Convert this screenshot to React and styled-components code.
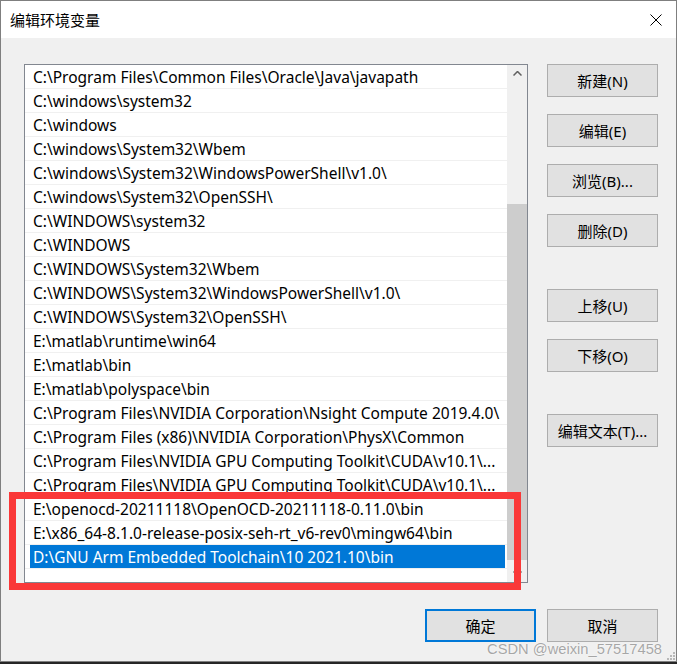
import styled, { createGlobalStyle } from 'styled-components';

const paths = [
  'C:\\Program Files\\Common Files\\Oracle\\Java\\javapath',
  'C:\\windows\\system32',
  'C:\\windows',
  'C:\\windows\\System32\\Wbem',
  'C:\\windows\\System32\\WindowsPowerShell\\v1.0\\',
  'C:\\windows\\System32\\OpenSSH\\',
  'C:\\WINDOWS\\system32',
  'C:\\WINDOWS',
  'C:\\WINDOWS\\System32\\Wbem',
  'C:\\WINDOWS\\System32\\WindowsPowerShell\\v1.0\\',
  'C:\\WINDOWS\\System32\\OpenSSH\\',
  'E:\\matlab\\runtime\\win64',
  'E:\\matlab\\bin',
  'E:\\matlab\\polyspace\\bin',
  'C:\\Program Files\\NVIDIA Corporation\\Nsight Compute 2019.4.0\\',
  'C:\\Program Files (x86)\\NVIDIA Corporation\\PhysX\\Common',
  'C:\\Program Files\\NVIDIA GPU Computing Toolkit\\CUDA\\v10.1\\...',
  'C:\\Program Files\\NVIDIA GPU Computing Toolkit\\CUDA\\v10.1\\...',
  'E:\\openocd-20211118\\OpenOCD-20211118-0.11.0\\bin',
  'E:\\x86_64-8.1.0-release-posix-seh-rt_v6-rev0\\mingw64\\bin',
  'D:\\GNU Arm Embedded Toolchain\\10 2021.10\\bin',
];

const sideButtons = [
  { label: '新建(N)', gap: 0 },
  { label: '编辑(E)', gap: 17 },
  { label: '浏览(B)...', gap: 17 },
  { label: '删除(D)', gap: 17 },
  { label: '上移(U)', gap: 42 },
  { label: '下移(O)', gap: 17 },
  { label: '编辑文本(T)...', gap: 42 },
];

const GlobalStyle = createGlobalStyle`
  html, body {
    margin: 0;
    padding: 0;
    background: #262626;
  }
  body {
    font-family: "Noto Sans", "Noto Sans CJK SC", sans-serif;
  }
`;

const Window = styled.div`
  position: relative;
  box-sizing: border-box;
  width: 677px;
  height: 662px;
  border: 1px solid #7f7f7f;
  background: #f0f0f0;
  display: flex;
  flex-direction: column;
`;

const TitleBar = styled.div`
  height: 37px;
  background: #fff;
  display: flex;
  align-items: center;
  justify-content: space-between;
  padding: 0 14px 0 9px;
`;

const Title = styled.span`
  font-size: 15px;
  color: #000;
`;

const Content = styled.div`
  flex: 1;
  display: flex;
  flex-direction: column;
  padding: 26px 18px 0 23px;
`;

const Main = styled.div`
  display: flex;
  gap: 19px;
`;

const ListBox = styled.div`
  box-sizing: border-box;
  width: 504px;
  height: 519px;
  border: 1px solid #828790;
  background: #fff;
  display: flex;
`;

const List = styled.ul`
  flex: 1;
  margin: 0;
  padding: 0;
  list-style: none;
  overflow: hidden;
`;

const Row = styled.li`
  height: 23px;
  border-bottom: 1px solid #f0f0f0;
  padding: 0 2px 0 5px;
  display: flex;
`;

const Cell = styled.div`
  flex: 1;
  display: flex;
  align-items: center;
  padding-left: 3px;
  font-size: 15.5px;
  white-space: nowrap;
  overflow: hidden;
  color: ${(p) => (p.$selected ? '#fff' : '#000')};
  background: ${(p) => (p.$selected ? '#0078d7' : 'transparent')};
`;

const ScrollBar = styled.div`
  width: 20px;
  background: #f0f0f0;
  display: flex;
  flex-direction: column;
`;

const ArrowBox = styled.div`
  height: 17px;
  display: flex;
  align-items: center;
  justify-content: center;
`;

const Track = styled.div`
  flex: 1;
  padding-top: ${(p) => p.$offset}px;
`;

const Thumb = styled.div`
  height: ${(p) => p.$size}px;
  background: #cdcdcd;
`;

const SideColumn = styled.div`
  display: flex;
  flex-direction: column;
`;

const Button = styled.button`
  box-sizing: border-box;
  width: 111px;
  height: 33px;
  margin-top: ${(p) => p.$gap || 0}px;
  padding: 0;
  background: #e1e1e1;
  border: ${(p) => (p.$default ? '2px solid #0078d7' : '1px solid #adadad')};
  font-family: "Noto Sans", "Noto Sans CJK SC", sans-serif;
  font-size: 15px;
  color: #000;
`;

const Footer = styled.div`
  display: flex;
  justify-content: flex-end;
  gap: 11px;
  margin-top: 26px;
`;

const Highlight = styled.div`
  position: absolute;
  left: 8px;
  top: 491px;
  width: 512px;
  height: 98px;
  box-sizing: border-box;
  border: 7px solid #fa3838;
  pointer-events: none;
`;

const Watermark = styled.div`
  position: absolute;
  right: 14px;
  bottom: 4px;
  font-family: "Liberation Sans", Arial, sans-serif;
  font-size: 14.7px;
  color: rgba(140, 140, 140, 0.75);
  text-shadow: 0 0 2px rgba(255, 255, 255, 0.9);
`;

const Grip = styled.svg`
  position: absolute;
  right: 1px;
  bottom: 1px;
`;

const CloseIcon = () => (
  <svg width="12" height="12" viewBox="0 0 12 12">
    <path d="M0.5 0.5 L11.5 11.5 M11.5 0.5 L0.5 11.5" stroke="#000" strokeWidth="1" fill="none" />
  </svg>
);

const Chevron = ({ down }) => (
  <svg width="9" height="5" viewBox="0 0 9 5">
    <path
      d={down ? 'M0.5 0.5 L4.5 4.5 L8.5 0.5' : 'M0.5 4.5 L4.5 0.5 L8.5 4.5'}
      stroke="#606060"
      strokeWidth="1.5"
      fill="none"
    />
  </svg>
);

const App = () => {
  const selected = paths.length - 1;

  return (
    <>
      <GlobalStyle />
      <Window>
        <TitleBar>
          <Title>编辑环境变量</Title>
          <CloseIcon />
        </TitleBar>

        <Content>
          <Main>
            <ListBox>
              <List>
                {paths.map((p, i) => (
                  <Row key={i}>
                    <Cell $selected={i === selected}>{p}</Cell>
                  </Row>
                ))}
              </List>
              <ScrollBar>
                <ArrowBox>
                  <Chevron />
                </ArrowBox>
                <Track $offset={122}>
                  <Thumb $size={356} />
                </Track>
                <ArrowBox>
                  <Chevron down />
                </ArrowBox>
              </ScrollBar>
            </ListBox>

            <SideColumn>
              {sideButtons.map((b) => (
                <Button key={b.label} $gap={b.gap}>
                  {b.label}
                </Button>
              ))}
            </SideColumn>
          </Main>

          <Footer>
            <Button $default>确定</Button>
            <Button>取消</Button>
          </Footer>
        </Content>

        <Highlight />
        <Watermark>CSDN @weixin_57517458</Watermark>
        <Grip width="10" height="10" viewBox="0 0 10 10">
          {[[8, 0], [8, 3], [5, 3], [8, 6], [5, 6], [2, 6]].map(([x, y]) => (
            <rect key={`${x}-${y}`} x={x} y={y + 2} width="2" height="2" fill="#b8b8b8" />
          ))}
        </Grip>
      </Window>
    </>
  );
};

export default App;
